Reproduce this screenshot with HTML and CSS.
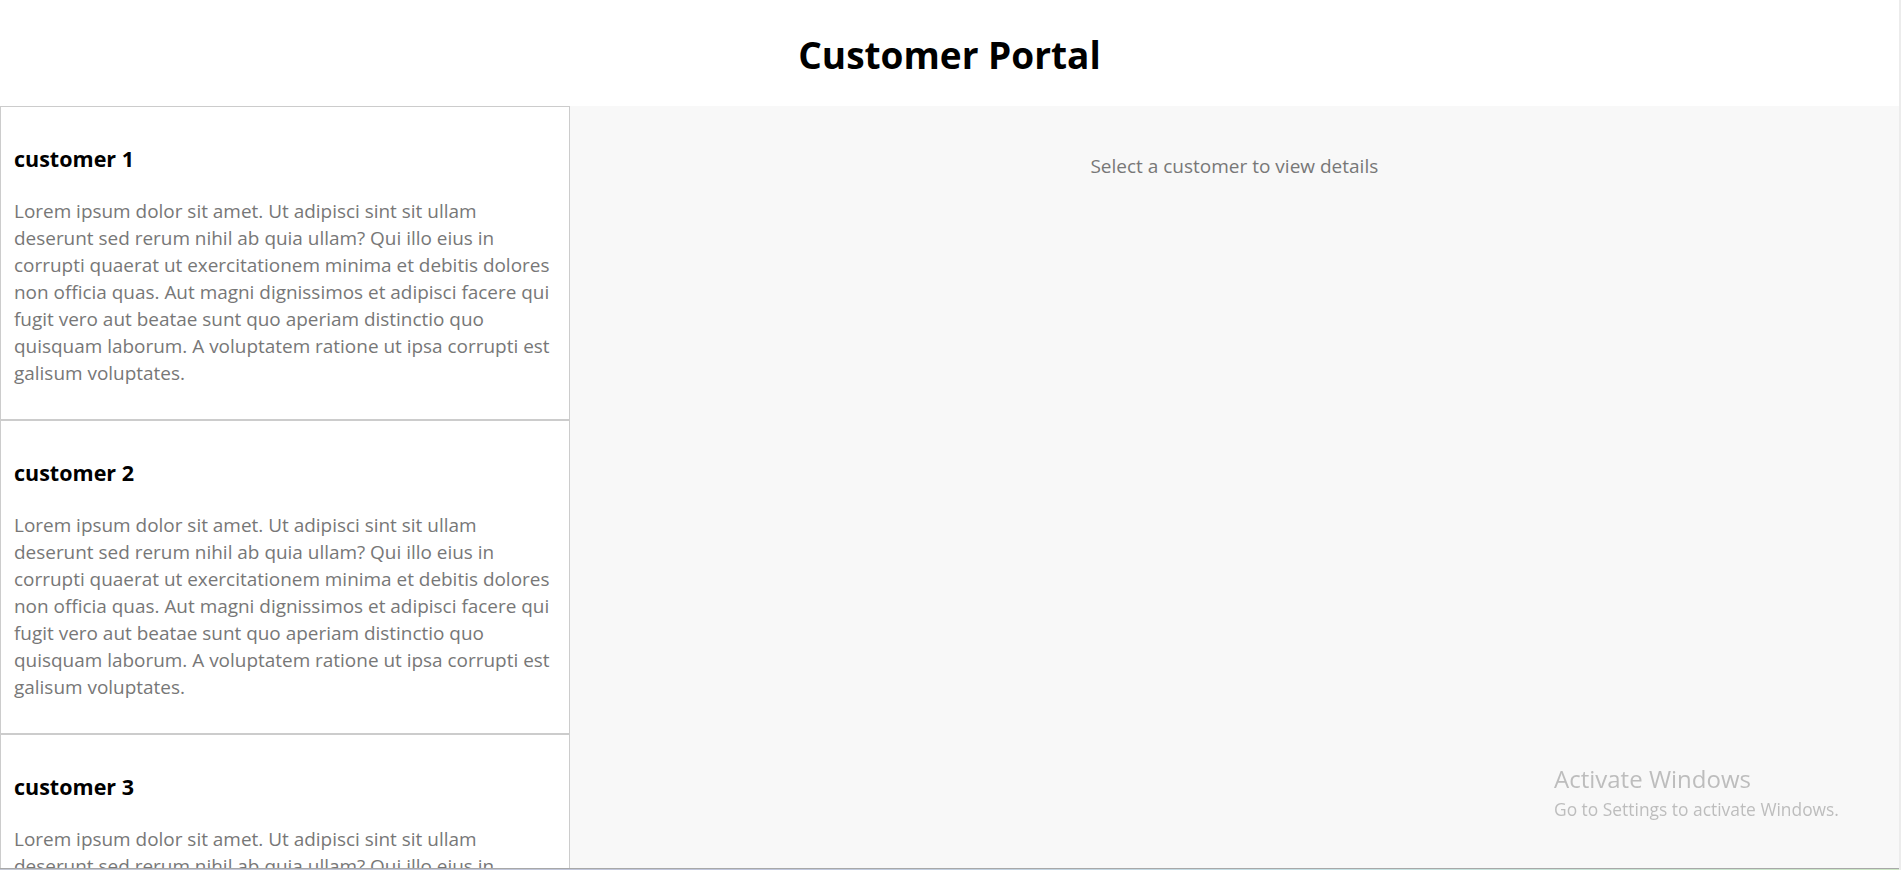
FILE: index.html
```html
<!DOCTYPE html>
<html lang="en">
<head>
<meta charset="utf-8">
<title>Customer Portal</title>
<link rel="stylesheet" href="styles.css">
</head>
<body>
<div class="app">
  <header class="header">
    <h1 class="title">Customer Portal</h1>
  </header>
  <main class="main">
    <aside class="list">
      <div class="card">
        <h3 class="card-title">customer 1</h3>
        <p class="card-text">Lorem ipsum dolor sit amet. Ut adipisci sint sit ullam<br>deserunt sed rerum nihil ab quia ullam? Qui illo eius in<br>corrupti quaerat ut exercitationem minima et debitis dolores<br>non officia quas. Aut magni dignissimos et adipisci facere qui<br>fugit vero aut beatae sunt quo aperiam distinctio quo<br>quisquam laborum. A voluptatem ratione ut ipsa corrupti est<br>galisum voluptates.</p>
      </div>
      <div class="card">
        <h3 class="card-title">customer 2</h3>
        <p class="card-text">Lorem ipsum dolor sit amet. Ut adipisci sint sit ullam<br>deserunt sed rerum nihil ab quia ullam? Qui illo eius in<br>corrupti quaerat ut exercitationem minima et debitis dolores<br>non officia quas. Aut magni dignissimos et adipisci facere qui<br>fugit vero aut beatae sunt quo aperiam distinctio quo<br>quisquam laborum. A voluptatem ratione ut ipsa corrupti est<br>galisum voluptates.</p>
      </div>
      <div class="card">
        <h3 class="card-title">customer 3</h3>
        <p class="card-text">Lorem ipsum dolor sit amet. Ut adipisci sint sit ullam<br>deserunt sed rerum nihil ab quia ullam? Qui illo eius in<br>corrupti quaerat ut exercitationem minima et debitis dolores<br>non officia quas. Aut magni dignissimos et adipisci facere qui<br>fugit vero aut beatae sunt quo aperiam distinctio quo<br>quisquam laborum. A voluptatem ratione ut ipsa corrupti est<br>galisum voluptates.</p>
      </div>
    </aside>
    <section class="details">
      <p class="placeholder">Select a customer to view details</p>
    </section>
  </main>
  <div class="edge"></div>
</div>
<div class="watermark">
  <div class="wm-title">Activate Windows</div>
  <div class="wm-sub">Go to Settings to activate Windows.</div>
</div>
</body>
</html>
```
FILE: styles.css
```css
html, body {
  margin: 0;
  padding: 0;
  height: 100%;
  overflow: hidden;
}

body {
  font-family: "Open Sans", "Noto Sans", sans-serif;
  background: #ffffff;
  color: #000;
}

.app {
  height: 100vh;
  display: flex;
  flex-direction: column;
  border-right: 2px solid #ececec;
  box-sizing: border-box;
}

.header {
  height: 106px;
  flex: 0 0 106px;
  display: flex;
  align-items: center;
  justify-content: center;
}

.title {
  margin: 0;
  font-size: 37px;
  font-weight: 700;
  line-height: 1;
  padding-top: 2px;
}

.main {
  flex: 1 1 auto;
  display: flex;
  min-height: 0;
}

.list {
  width: 30%;
  flex: 0 0 30%;
  overflow: hidden;
}

.card {
  border: 1px solid #cccccc;
  padding: 14px 4px 14px 13px;
  background: #fff;
}

.card-title {
  margin: 24px 0 25px;
  font-size: 21.5px;
  line-height: 28px;
  font-weight: 700;
}

.card-text {
  margin: 0 0 18px;
  font-size: 18.95px;
  line-height: 27px;
  color: #777777;
  white-space: nowrap;
}

.details {
  flex: 1 1 auto;
  background: #f8f8f8;
  padding-top: 47px;
  text-align: center;
}

.placeholder {
  margin: 0;
  font-size: 19px;
  line-height: 27px;
  color: #777777;
}

.edge {
  flex: 0 0 2px;
  height: 2px;
  box-sizing: border-box;
  border-top: 1px solid #a8a8a8;
  background: linear-gradient(to right, #c4c8d4, #c0c6dc 40%, #c6e2e6 70%, #cce6c4);
}

.watermark {
  position: fixed;
  left: 1554px;
  top: 763px;
  color: rgba(150, 150, 150, 0.6);
  pointer-events: none;
}

.wm-title {
  font-size: 24px;
  line-height: 32px;
}

.wm-sub {
  font-size: 17.4px;
  line-height: 29px;
}
```
